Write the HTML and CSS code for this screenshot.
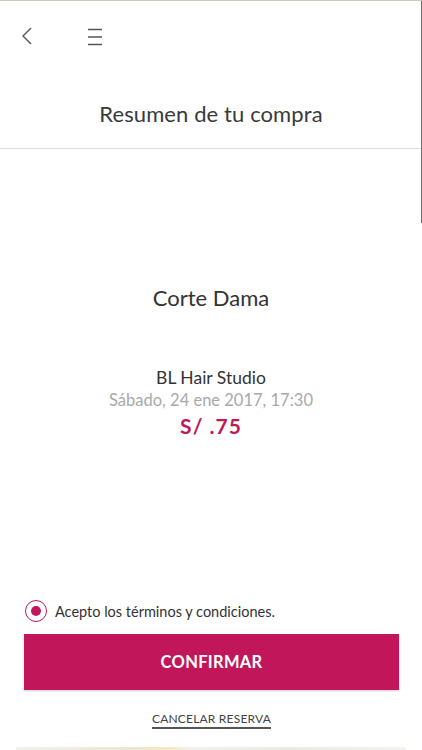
FILE: index.html
```html
<!DOCTYPE html>
<html lang="es">
<head>
<meta charset="utf-8">
<title>Resumen de tu compra</title>
<link rel="stylesheet" href="styles.css">
</head>
<body>
<div class="screen">
  <header class="header">
    <div class="topbar">
      <button class="icon-btn back" aria-label="Atrás">
        <svg width="12" height="18" viewBox="0 0 12 18"><path d="M10 1 L2 9 L10 17" fill="none" stroke="#555" stroke-width="1.4"/></svg>
      </button>
      <button class="icon-btn menu" aria-label="Menú">
        <svg width="16" height="18" viewBox="0 0 16 18"><path d="M1 1.5H15M1 9H15M1 16.5H15" stroke="#555" stroke-width="1.3"/></svg>
      </button>
    </div>
    <h1 class="title">Resumen de tu compra</h1>
  </header>
  <main class="summary">
    <h2 class="service">Corte Dama</h2>
    <div class="details">
      <p class="salon">BL Hair Studio</p>
      <p class="date">Sábado, 24 ene 2017, 17:30</p>
      <p class="price">S/ .75</p>
    </div>
  </main>
  <footer class="actions">
    <label class="terms">
      <span class="radio"><span class="dot"></span></span>
      <span>Acepto los términos y condiciones.</span>
    </label>
    <button class="confirm">CONFIRMAR</button>
    <a class="cancel" href="#">CANCELAR RESERVA</a>
  </footer>
  <div class="strip"></div>
</div>
</body>
</html>
```
FILE: styles.css
```css
* { box-sizing: border-box; }
html, body { margin: 0; padding: 0; }
body {
  font-family: "Lato", "Open Sans", sans-serif;
  background: #fff;
  color: #333;
}
.screen {
  width: 422px;
  height: 750px;
  display: flex;
  flex-direction: column;
  border-top: 1px solid #cfc9bd;
  position: relative;
  overflow: hidden;
}
.screen::after {
  content: "";
  position: absolute;
  right: 0;
  top: 0;
  width: 1px;
  height: 222px;
  background: #6b6b6b;
}
.header {
  height: 148px;
  flex-shrink: 0;
  border-bottom: 1px solid #dcdcdc;
  display: flex;
  flex-direction: column;
}
.topbar {
  display: flex;
  align-items: center;
  gap: 54px;
  padding: 12px 0 0 21px;
  height: 58px;
}
.icon-btn {
  background: none;
  border: 0;
  padding: 0;
  display: flex;
}
.menu { margin-top: 1px; }
.title {
  margin: 41px 0 0;
  text-align: center;
  font-size: 22px;
  font-weight: 400;
  color: #3a3a3a;
  letter-spacing: 0.1px;
}
.summary {
  display: flex;
  flex-direction: column;
  align-items: center;
  padding-top: 135px;
  flex: 1;
}
.service {
  margin: 0;
  font-size: 22px;
  font-weight: 400;
  color: #333;
}
.details {
  margin-top: 55px;
  text-align: center;
}
.details p { margin: 0; }
.salon { font-size: 17.5px; color: #333; line-height: 24px; }
.date { font-size: 16.5px; color: #a9a9a9; line-height: 21px; }
.price {
  font-size: 21px;
  font-weight: 700;
  color: #c0185a;
  line-height: 30px;
  letter-spacing: 1px;
}
.actions {
  display: flex;
  flex-direction: column;
  flex-shrink: 0;
  padding: 0 23px 0 24px;
  margin-bottom: 17px;
}
.terms {
  display: flex;
  align-items: center;
  gap: 8px;
  font-size: 14.5px;
  color: #333;
  padding-left: 1px;
}
.radio {
  width: 22px;
  height: 22px;
  border: 1.5px solid #c0185a;
  border-radius: 50%;
  display: flex;
  align-items: center;
  justify-content: center;
}
.dot {
  width: 10px;
  height: 10px;
  border-radius: 50%;
  background: #c0185a;
}
.confirm {
  margin-top: 12px;
  height: 56px;
  border: 0;
  background: #c1175a;
  color: #fff;
  font-family: "Lato", sans-serif;
  font-weight: 700;
  font-size: 16.5px;
  letter-spacing: 0.3px;
  box-shadow: 0 1px 2px rgba(0,0,0,0.2);
}
.cancel {
  align-self: center;
  margin-top: 21px;
  font-size: 12px;
  color: #444;
  text-decoration: none;
  border-bottom: 2px solid #555;
  padding-bottom: 1px;
  letter-spacing: 0.2px;
}
.strip {
  height: 3px;
  flex-shrink: 0;
  margin: 1px 16px 0;
  background: linear-gradient(90deg, #ece8dc, #ddd6b8 30%, #f0d890 38%, #ebe8de 45%, #e0dccd 70%, #eeebe2);
  opacity: 0.6;
}
```
